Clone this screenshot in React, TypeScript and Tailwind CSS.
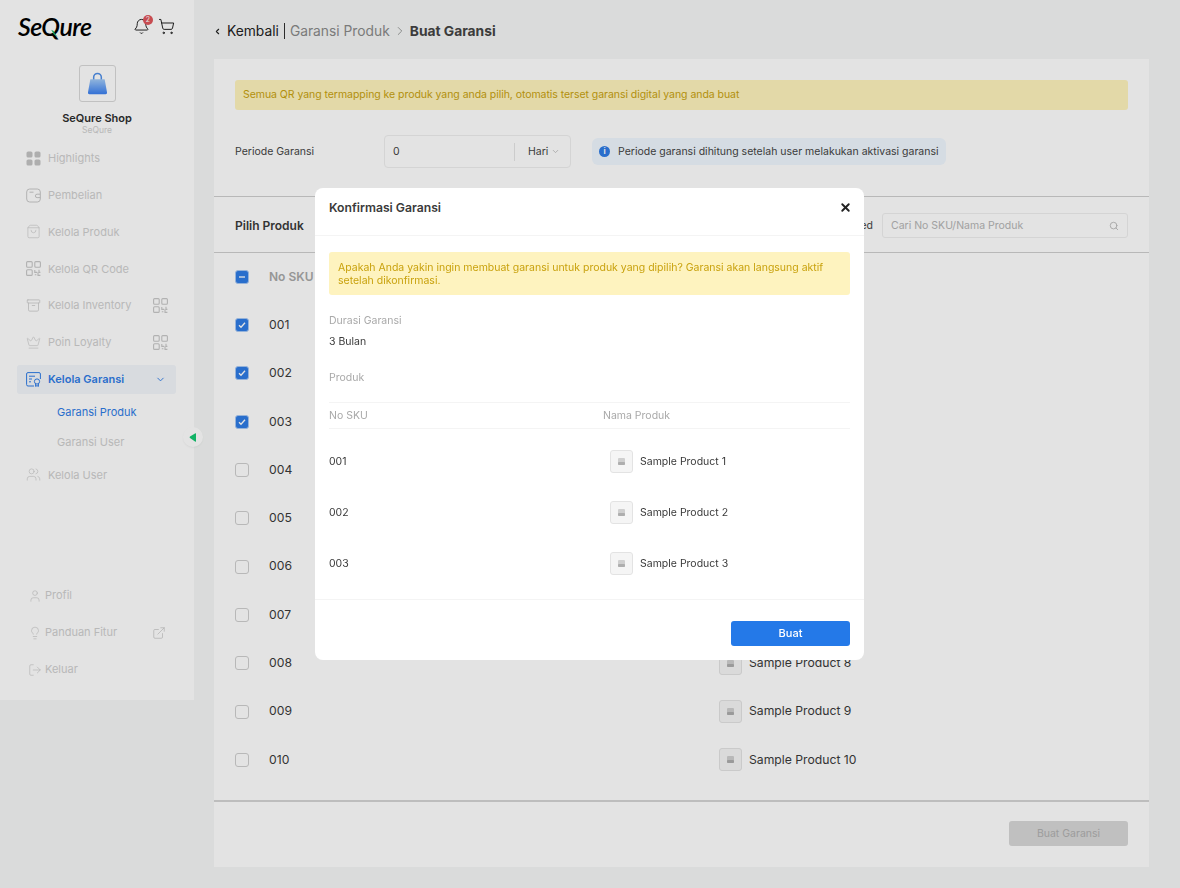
import { Archive, Bell, ChevronDown, ChevronLeft, ChevronRight, Crown, ExternalLink, Lightbulb, LogOut, Search, ShoppingBag, ShoppingCart, User, Users, X } from "lucide-react";
import type { ReactNode } from "react";

const font = { fontFamily: "Inter, 'Liberation Sans', sans-serif" };

const tableRows = ["001", "002", "003", "004", "005", "006", "007", "008", "009", "010"];
const modalRows = ["001", "002", "003"];

function GridIcon() {
  return (
    <svg width="15" height="15" viewBox="0 0 15 15" fill="#c4c4c4">
      <rect x="0.5" y="0.5" width="6" height="6" rx="1.6" />
      <rect x="8.5" y="0.5" width="6" height="6" rx="1.6" />
      <rect x="0.5" y="8.5" width="6" height="6" rx="1.6" />
      <rect x="8.5" y="8.5" width="6" height="6" rx="1.6" />
    </svg>
  );
}

function WalletIcon() {
  return (
    <svg width="15" height="15" viewBox="0 0 15 15" fill="none" stroke="#c8c8c8" strokeWidth="1">
      <rect x="0.7" y="1" width="13.6" height="13" rx="3" />
      <path d="M3.5 4.2h4" />
      <path d="M14.3 6.2h-3.2a1.7 1.7 0 0 0 0 3.4h3.2" />
    </svg>
  );
}

function QrIcon() {
  return (
    <svg width="15" height="15" viewBox="0 0 15 15" fill="none" stroke="#c8c8c8" strokeWidth="1.1">
      <rect x="0.6" y="0.6" width="5.6" height="5.6" rx="1" />
      <rect x="8.8" y="0.6" width="5.6" height="5.6" rx="1" />
      <rect x="0.6" y="8.8" width="5.6" height="5.6" rx="1" />
      <path d="M8.8 9v2.4h2.4M13 8.8v2.6h1.4M8.8 13.800h1.600M12 11.600v2.800h2.400" />
    </svg>
  );
}

function WarrantyIcon() {
  return (
    <svg width="15" height="15" viewBox="0 0 15 15" fill="none" stroke="#2f7ce6" strokeWidth="1">
      <path d="M8 14H2a1.400 1.400 0 0 1-1.400-1.400V2A1.400 1.400 0 0 1 2 .6h11A1.400 1.400 0 0 1 14.400 2v5" />
      <path d="M3 4.200h6M3 7h3M3 9.800h2" />
      <circle cx="11" cy="9.500" r="2.600" />
      <path d="M9.600 11.800V14.400l1.400-.8 1.400.8v-2.600" />
    </svg>
  );
}

function NavItem({ icon, label, extra, active }: { icon: ReactNode; label: string; extra?: ReactNode; active?: boolean }) {
  return (
    <div className={`ml-[17px] mr-[18px] h-[28.800px] my-[4px] flex items-center rounded-[3px] pl-[9px] pr-[8px] ${active ? "bg-[#f3f6fb]" : ""}`}>
      <span className="w-[22px] flex items-center">{icon}</span>
      <span className={`text-[11px] ${active ? "font-semibold text-[#2f7ce6]" : "text-[#cfcfcf]"}`}>{label}</span>
      {extra && <span className="ml-auto flex items-center">{extra}</span>}
    </div>
  );
}

function BottomItem({ icon, label, extra }: { icon: ReactNode; label: string; extra?: ReactNode }) {
  return (
    <div className="h-[37px] pl-[28px] pr-[28px] flex items-center">
      <span className="w-[17px] flex items-center">{icon}</span>
      <span className="text-[11px] text-[#cfcfcf]">{label}</span>
      {extra && <span className="ml-auto flex items-center">{extra}</span>}
    </div>
  );
}

function Sidebar() {
  return (
    <aside className="relative w-[194px] h-[700px] shrink-0 bg-white flex flex-col">
      <div className="h-[53px] pl-[18px] pr-[19px] flex items-center justify-between">
        <div className="relative leading-none text-[25px] font-semibold italic text-black tracking-[-0.6px]" style={{ fontFamily: "Lato, sans-serif" }}>
          SeQure
          <svg className="absolute left-[32px] top-[15px]" width="9" height="9" viewBox="0 0 10 11">
            <path d="M1 1l3 1.500 1.500 3L9 10 4 6.500z" fill="#1fb56a" />
          </svg>
        </div>
        <div className="flex items-center gap-[8px]">
          <div className="relative">
            <Bell size={17} strokeWidth={1.3} color="#111" />
            <span className="absolute -top-[3px] -right-[3px] w-[10px] h-[10px] rounded-full bg-[#e0565b] text-white text-[7px] leading-[10px] text-center">2</span>
          </div>
          <ShoppingCart size={17} strokeWidth={1.3} color="#111" />
        </div>
      </div>

      <div className="flex flex-col items-center mt-[12px]">
        <div className="w-[37px] h-[37px] rounded-[3px] border border-[#d9d9d9] flex items-center justify-center">
          <svg width="21" height="24" viewBox="0 0 22 24">
            <defs>
              <linearGradient id="bag" x1="0" y1="0" x2="0" y2="1">
                <stop offset="0" stopColor="#a3cbf8" />
                <stop offset="1" stopColor="#3a7ff0" />
              </linearGradient>
            </defs>
            <path d="M7 9V5a4 4 0 0 1 8 0v4" fill="none" stroke="#4f8fe8" strokeWidth="1.600" />
            <path d="M3.500 7h15L21 21a1.500 1.500 0 0 1-1.500 1.700h-17A1.500 1.500 0 0 1 1 21z" fill="url(#bag)" />
          </svg>
        </div>
        <div className="mt-[9px] text-[11px] font-semibold leading-[14px] text-[#2e2e2e]">SeQure Shop</div>
        <div className="text-[8.500px] leading-[11px] text-[#cfcfcf]">SeQure</div>
      </div>

      <nav className="mt-[4px] flex flex-col">
        <NavItem icon={<GridIcon />} label="Highlights" />
        <NavItem icon={<WalletIcon />} label="Pembelian" />
        <NavItem icon={<ShoppingBag size={15} strokeWidth={1} color="#c8c8c8" />} label="Kelola Produk" />
        <NavItem icon={<QrIcon />} label="Kelola QR Code" />
        <NavItem icon={<Archive size={15} strokeWidth={1.2} color="#c8c8c8" />} label="Kelola Inventory" extra={<QrIcon />} />
        <NavItem icon={<Crown size={15} strokeWidth={1} color="#c8c8c8" />} label="Poin Loyalty" extra={<QrIcon />} />
        <NavItem active icon={<WarrantyIcon />} label="Kelola Garansi" extra={<ChevronDown size={11} color="#2f7ce6" className="mr-[2px]" />} />
        <div className="h-[29.500px] pl-[57px] flex items-center text-[11px] text-[#2f7ce6]">Garansi Produk</div>
        <div className="h-[29.500px] pl-[57px] flex items-center text-[11px] text-[#cfcfcf]">Garansi User</div>
        <NavItem icon={<Users size={15} strokeWidth={1} color="#c8c8c8" />} label="Kelola User" />
      </nav>

      <div className="mt-auto mb-[12px] flex flex-col">
        <BottomItem icon={<User size={14} strokeWidth={1.100} color="#c8c8c8" />} label="Profil" />
        <BottomItem icon={<Lightbulb size={14} strokeWidth={1.100} color="#c8c8c8" />} label="Panduan Fitur" extra={<ExternalLink size={14} strokeWidth={1.200} color="#c4c4c4" />} />
        <BottomItem icon={<LogOut size={14} strokeWidth={1.100} color="#c8c8c8" />} label="Keluar" />
      </div>

      <button className="absolute top-[427px] -right-[9px] w-[20px] h-[20px] rounded-full bg-white shadow-xs flex items-center justify-center">
        <svg width="8" height="9" viewBox="0 0 8 9">
          <path d="M7 0.500v8a1 1 0 0 1-1 0L1 5a1 1 0 0 1 0-1.500l5-3a1 1 0 0 1 1 0z" fill="#14c872" />
        </svg>
      </button>
    </aside>
  );
}

function Checkbox({ state }: { state: "on" | "off" | "mixed" }) {
  if (state === "off") return <span className="w-[14px] h-[14px] rounded-[3px] border border-[#cfcfcf] bg-white shrink-0" />;
  return (
    <span className="w-[14px] h-[14px] rounded-[3px] bg-[#2f7ce6] border border-[#a9c9f4] shrink-0 flex items-center justify-center">
      <svg width="10" height="10" viewBox="0 0 10 10" fill="none" stroke="white" strokeWidth="1.300">
        {state === "on" ? <path d="M2 5.200l2 2 4-4.400" /> : <path d="M2 5h6" />}
      </svg>
    </span>
  );
}

function Thumb() {
  return (
    <span className="w-[23px] h-[23px] rounded-[3px] border border-[#e3e3e3] bg-[#f5f5f5] flex items-center justify-center shrink-0">
      <svg width="7" height="7" viewBox="0 0 7 7">
        <rect width="7" height="7" rx="1" fill="#cfcfcf" />
        <rect y="4" width="7" height="3" rx="1" fill="#aeaeae" />
      </svg>
    </span>
  );
}

function MainCard() {
  return (
    <section className="w-[935px] h-[808px] bg-white flex flex-col">
      <div className="h-[137px] px-[21px] pt-[21px] shrink-0">
        <div className="h-[30px] rounded-[3px] bg-[#fff4bd] px-[8px] flex items-center text-[10.500px] tracking-[-0.05px] text-[#c9a20e]">
          Semua QR yang termapping ke produk yang anda pilih, otomatis terset garansi digital yang anda buat
        </div>
        <div className="mt-[25px] flex items-center">
          <div className="w-[149px] text-[10.500px] text-[#444]">Periode Garansi</div>
          <div className="w-[187px] h-[33px] rounded-[4px] border border-[#efefef] flex items-center text-[10.500px] text-[#444]">
            <span className="flex-1 pl-[8px]">0</span>
            <span className="w-px h-[18px] bg-[#e6e6e6]" />
            <span className="w-[55px] pl-[13px] flex items-center gap-[3px]">
              Hari <ChevronDown size={9} color="#b5b5b5" />
            </span>
          </div>
          <div className="ml-[21px] h-[27px] rounded-[6px] bg-[#f0f8ff] px-[7px] flex items-center gap-[8px] text-[10.500px] text-[#444]">
            <span className="w-[11px] h-[11px] rounded-full bg-[#2f7ce6] text-white text-[8px] leading-[11px] text-center font-bold">i</span>
            Periode garansi dihitung setelah user melakukan aktivasi garansi
          </div>
        </div>
      </div>

      <div className="h-[57px] shrink-0 border-y border-[#cfcfcf] px-[21px] pt-[2px] flex items-center">
        <span className="text-[12px] font-semibold text-[#3a3a3a]">Pilih Produk</span>
        <span className="ml-auto text-[10.500px] text-[#444]">3 Produk Selected</span>
        <div className="ml-[9px] w-[246px] h-[25px] rounded-[3px] border border-[#efefef] px-[8px] flex items-center justify-between text-[10.500px] text-[#b5b5b5]">
          Cari No SKU/Nama Produk
          <Search size={10} color="#b5b5b5" />
        </div>
      </div>

      <div className="flex-1 px-[21px]">
        <div className="h-[47.500px] mb-[0.500px] flex items-center">
          <Checkbox state="mixed" />
          <span className="ml-[20px] text-[12px] font-semibold text-[#a9a9a9]">No SKU</span>
        </div>
        {tableRows.map((sku, i) => (
          <div key={sku} className="h-[48.300px] flex items-center">
            <Checkbox state={i < 3 ? "on" : "off"} />
            <span className="ml-[20px] w-[450px] text-[12.200px] text-[#3a3a3a]">{sku}</span>
            <Thumb />
            <span className="ml-[7px] text-[12.200px] text-[#3a3a3a]">Sample Product {i + 1}</span>
          </div>
        ))}
      </div>

      <div className="h-[67px] shrink-0 border-t-2 border-[#d5d5d5] px-[21px] pb-[2px] flex items-center justify-end">
        <button className="w-[119px] h-[25px] rounded-[3px] bg-[#d8d8d8] text-[10.500px] text-[#b0b0b0]">Buat Garansi</button>
      </div>
    </section>
  );
}

function ConfirmModal() {
  return (
    <div className="fixed inset-0 bg-black/[0.11] pt-[188px] pl-[315px]">
      <div className="w-[549px] h-[472px] rounded-[8px] bg-white flex flex-col">
        <div className="h-[48px] shrink-0 border-b border-[#f4f4f4] pl-[14px] pr-[12px] pt-[11px] flex justify-between">
          <span className="text-[12.200px] font-semibold text-[#3a3a3a]">Konfirmasi Garansi</span>
          <X size={13} strokeWidth={3.500} color="#222" className="mt-[2px]" />
        </div>
        <div className="flex-1 px-[14px] pt-[16px]">
          <div className="h-[43px] rounded-[3px] bg-[#fef3bf] px-[9px] flex items-center text-[10.500px] leading-[13px] text-[#c9a20e]">
            Apakah Anda yakin ingin membuat garansi untuk produk yang dipilih? Garansi akan langsung aktif setelah dikonfirmasi.
          </div>
          <div className="mt-[19px] text-[10.500px] leading-[13px] text-[#a9a9a9]">Durasi Garansi</div>
          <div className="mt-[8px] text-[10.500px] leading-[13px] text-[#3a3a3a]">3 Bulan</div>
          <div className="mt-[23px] text-[10.500px] leading-[13px] text-[#a9a9a9]">Produk</div>
          <div className="mt-[18px] h-[27px] border-y border-[#f4f4f4] flex items-center text-[10.500px] text-[#a9a9a9]">
            <span className="w-[274px]">No SKU</span>
            <span>Nama Produk</span>
          </div>
          <div className="mt-[7px]">
            {modalRows.map((sku, i) => (
              <div key={sku} className="h-[51px] flex items-center text-[10.500px] text-[#3a3a3a]">
                <span className="w-[281px]">{sku}</span>
                <Thumb />
                <span className="ml-[7px]">Sample Product {i + 1}</span>
              </div>
            ))}
          </div>
        </div>
        <div className="h-[61px] shrink-0 border-t border-[#f4f4f4] px-[14px] pt-[21px] flex justify-end">
          <button className="w-[119px] h-[25px] rounded-[3px] bg-[#2479e8] text-[11px] font-medium text-white">Buat</button>
        </div>
      </div>
    </div>
  );
}

export default function App() {
  return (
    <div className="relative h-[888px] overflow-hidden bg-[#f5f7f6] flex items-start" style={font}>
      <Sidebar />
      <main className="pl-[20px] flex-1">
        <header className="h-[59px] pt-[3px] flex items-center text-[13.800px]">
          <ChevronLeft size={9} strokeWidth={3} color="#222" className="mr-[5px] -ml-[1px]" />
          <span className="text-[#222]">Kembali</span>
          <span className="w-px h-[16px] bg-[#333] mx-[5px]" />
          <span className="text-[#8a8a8a]">Garansi Produk</span>
          <ChevronRight size={14} strokeWidth={1.200} color="#777" className="mx-[3px]" />
          <span className="font-bold text-[#444]">Buat Garansi</span>
        </header>
        <MainCard />
      </main>
      <ConfirmModal />
    </div>
  );
}
